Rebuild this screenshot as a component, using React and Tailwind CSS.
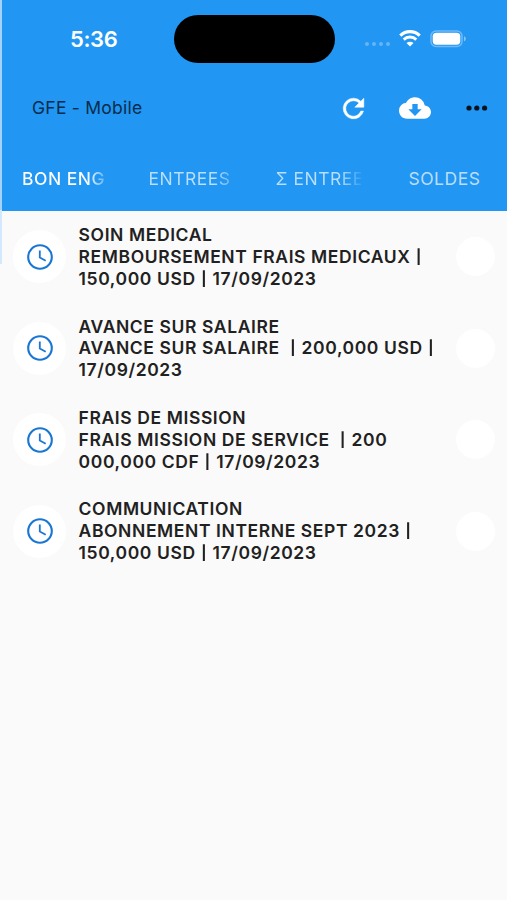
import React from "react";

const entries = [
  { title: "SOIN MEDICAL", lines: ["REMBOURSEMENT FRAIS MEDICAUX |", "150,000 USD | 17/09/2023"] },
  { title: "AVANCE SUR SALAIRE", lines: ["AVANCE SUR SALAIRE  | 200,000 USD |", "17/09/2023"] },
  { title: "FRAIS DE MISSION", lines: ["FRAIS MISSION DE SERVICE  | 200", "000,000 CDF | 17/09/2023"] },
  { title: "COMMUNICATION", lines: ["ABONNEMENT INTERNE SEPT 2023 |", "150,000 USD | 17/09/2023"] },
];

function StatusBar() {
  return (
    <div className="flex h-[62px] items-start text-white">
      <div className="w-[174px] pl-[70px] pt-[25px] text-[22px] font-semibold leading-[28px] tracking-[-0.4px]">5:36</div>
      <div className="mt-[15px] h-[48px] w-[161px] shrink-0 rounded-full bg-black" />
      <div className="ml-[30px] mt-[42px] flex gap-[3px]">
        {[0, 1, 2, 3].map((i) => (
          <span key={i} className="h-[4px] w-[4px] rounded-full bg-white/30" />
        ))}
      </div>
      <svg className="ml-[9px] mt-[30px] shrink-0" width="22" height="17" viewBox="0 0 22 17" fill="none" stroke="white">
        <path d="M1.3 5.6C6.7.4 15.3.4 20.7 5.6" strokeWidth="3.2" />
        <path d="M4.7 9.6c3.5-3.4 9.1-3.4 12.6 0" strokeWidth="2.9" />
        <path d="M11 16.6l-3.5-3.6c2-1.8 5-1.8 7 0z" fill="white" stroke="none" />
      </svg>
      <svg className="ml-[9px] mt-[30px] shrink-0" width="37" height="18" viewBox="0 0 37 18">
        <rect x="1" y="1" width="31" height="15.5" rx="5" fill="none" stroke="white" strokeOpacity=".35" strokeWidth="1.5" />
        <rect x="2.7" y="2.7" width="27.6" height="12" rx="3.6" fill="white" />
        <path d="M34 6.2c2.4.8 2.4 4.3 0 5.1z" fill="white" fillOpacity=".45" />
      </svg>
    </div>
  );
}

function Toolbar() {
  return (
    <div className="flex h-[92px] items-center pl-[32px]">
      <h1 className="w-[306px] text-[17.5px] leading-[24px] tracking-[0.25px] text-[#072c4c]">GFE - Mobile</h1>
      <svg width="31" height="31" viewBox="0 0 24 24" fill="white" stroke="white" strokeWidth=".4">
        <path d="M17.65 6.35A7.96 7.96 0 0 0 12 4a8 8 0 1 0 7.73 10h-2.08A6 6 0 1 1 12 6c1.66 0 3.14.69 4.22 1.78L13 11h7V4z" />
      </svg>
      <svg className="ml-[30px]" width="32" height="32" viewBox="0 0 24 24" fill="white">
        <path d="M19.35 10.04A7.49 7.49 0 0 0 12 4C9.11 4 6.6 5.64 5.35 8.04A5.994 5.994 0 0 0 0 14c0 3.31 2.69 6 6 6h13c2.76 0 5-2.24 5-5 0-2.64-2.05-4.78-4.65-4.96zM17 13l-5 5-5-5h3V9h4v4h3z" />
      </svg>
      <svg className="ml-[35px]" width="22" height="6" viewBox="0 0 22 6" fill="#08121c">
        <circle cx="3" cy="3" r="2.6" />
        <circle cx="10.8" cy="3" r="2.6" />
        <circle cx="18.6" cy="3" r="2.6" />
      </svg>
    </div>
  );
}

function Tabs() {
  return (
    <nav className="flex h-[49px] items-center whitespace-nowrap pl-[22px] text-[17.5px] font-medium leading-[24px] tracking-[0.5px]">
      <div className="w-[126.5px] shrink-0">
        <div className="w-[83px] bg-linear-to-r from-white from-78% to-white/30 bg-clip-text text-transparent">BON ENG</div>
      </div>
      <div className="w-[127px] shrink-0 font-normal">
        <div className="w-[83px] bg-linear-to-r from-white/70 from-78% to-white/30 bg-clip-text text-transparent">ENTREES</div>
      </div>
      <div className="w-[133px] shrink-0 font-normal">
        <div className="w-[85px] bg-linear-to-r from-white/70 from-75% to-white/10 bg-clip-text text-transparent">Σ ENTREE</div>
      </div>
      <div className="font-normal text-white/70">SOLDES</div>
    </nav>
  );
}

function Line({ text }) {
  return (
    <div>
      {text.split("|").map((part, i) => (
        <React.Fragment key={i}>
          {i > 0 && <span className="inline-block origin-[50%_55%] scale-y-80">|</span>}
          {part}
        </React.Fragment>
      ))}
    </div>
  );
}

function Entry({ entry }) {
  return (
    <li className="flex h-[91.4px] items-center">
      <div className="ml-[13px] flex h-[53px] w-[53px] shrink-0 items-center justify-center rounded-full bg-white">
        <svg width="26" height="26" viewBox="0 0 26 26" fill="none" stroke="#1976d2">
          <circle cx="13" cy="13" r="11.8" strokeWidth="2.1" />
          <path d="M12.8 6.5v7l5.9 3.3" strokeWidth="1.8" />
        </svg>
      </div>
      <div className="ml-[12.6px] w-[377.4px] shrink-0 whitespace-pre text-[17.5px] font-semibold leading-[21.8px] tracking-[0.6px] text-[#212121]">
        <Line text={entry.title} />
        {entry.lines.map((line) => (
          <Line key={line} text={line} />
        ))}
      </div>
      <div className="h-[39px] w-[39px] shrink-0 rounded-full bg-white" />
    </li>
  );
}

export default function App() {
  return (
    <div className="relative h-[900px] w-[507px] overflow-hidden bg-[#fafafa] font-[Inter,sans-serif]">
      <header className="h-[210.5px] bg-[#2196f3]">
        <StatusBar />
        <Toolbar />
        <Tabs />
      </header>
      <ul className="pt-[0.8px]">
        {entries.map((entry) => (
          <Entry key={entry.title} entry={entry} />
        ))}
      </ul>
      <div className="absolute left-0 top-0 h-[210px] w-[1.5px] bg-[#a3d2fb]" />
      <div className="absolute left-0 top-[210px] h-[54px] w-[1.5px] bg-[#d3e8ff]" />
    </div>
  );
}
